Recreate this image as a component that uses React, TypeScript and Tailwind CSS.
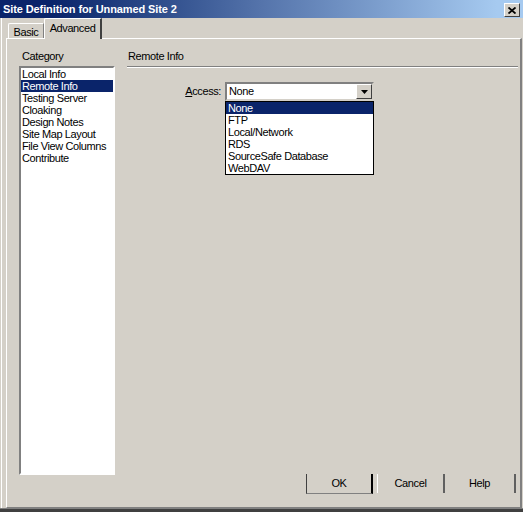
import { Fragment } from "react";

const CATEGORIES = [
  "Local Info",
  "Remote Info",
  "Testing Server",
  "Cloaking",
  "Design Notes",
  "Site Map Layout",
  "File View Columns",
  "Contribute",
];

const ACCESS_OPTIONS = ["None", "FTP", "Local/Network", "RDS", "SourceSafe Database", "WebDAV"];

function CloseButton() {
  return (
    <div className="w-[16px] h-[14px] mt-[3px] mr-[3px] bg-[#d4d0c8] border-t border-l border-white border-r border-b border-r-[#404040] border-b-[#404040] flex items-center justify-center">
      <svg width="8" height="7" viewBox="0 0 8 7">
        <path d="M0.5 0.5 L7.5 6.5 M7.5 0.5 L0.5 6.5" stroke="#000" strokeWidth="1.8" />
      </svg>
    </div>
  );
}

export default function App() {
  return (
    <div className="w-[523px] h-[512px] bg-[#d4d0c8] flex flex-col font-['Liberation_Sans',Arial,sans-serif] text-[11px] tracking-[-0.4px] text-black overflow-hidden">
      {/* title bar */}
      <div className="h-[18px] flex justify-between bg-linear-to-r from-[#0a246a] from-10% via-[#5574ab] via-50% to-[#a6caf0] to-95%">
        <span className="pl-[3px] pt-[2px] text-white font-bold text-[11px] leading-[14px] tracking-[-0.1px]">
          Site Definition for Unnamed Site 2
        </span>
        <CloseButton />
      </div>

      <div className="flex-1 flex flex-col border-l border-white ml-[1px] mr-[1px]">
        {/* tabs */}
        <div className="h-[20px] flex items-end pl-[6px]">
          <div className="h-[15px] w-[36px] border-l border-t border-white border-r border-r-[#808080] rounded-tl-[2px] flex justify-center pt-[2px] leading-[12px]">
            Basic
          </div>
          <div className="relative z-10 -mb-[1px] h-[21px] w-[58px] bg-[#d4d0c8] border-l border-t border-white border-r-2 border-r-[#404040] rounded-tl-[2px] flex justify-center pt-[3px] leading-[12px]">
            Advanced
          </div>
        </div>

        {/* tab panel */}
        <div className="h-[470px] ml-[4px] border-l border-t border-white border-r-2 border-r-[#808080] border-b border-b-[#808080] flex">
          <div className="ml-[12px] w-[96px] flex flex-col pt-[11px]">
            <div className="leading-[12px] pl-[3px]">Category</div>
            <div className="mt-[4px] h-[409px] bg-white border-2 border-t-[#808080] border-l-[#808080] border-r-white border-b-white">
              {CATEGORIES.map((c) => (
                <div
                  key={c}
                  className={`h-[12px] leading-[12px] pl-[1px] whitespace-nowrap ${
                    c === "Remote Info" ? "bg-[#0a246a] text-white" : ""
                  }`}
                >
                  {c}
                </div>
              ))}
            </div>
          </div>

          <div className="flex-1 ml-[12px] mr-[2px] flex flex-col pt-[11px] pb-[13px]">
            <div className="leading-[12px] pl-[1px]">Remote Info</div>
            <div className="mt-[4px] border-t border-[#808080] border-b border-b-white" />

            <div className="mt-[14px] flex items-center">
              <div className="w-[94px] text-right">
                <span className="underline">A</span>ccess:
              </div>
              <div className="relative ml-[4px] w-[149px] h-[19px] bg-white border-2 border-t-[#808080] border-l-[#808080] border-r-[#d4d0c8] border-b-[#d4d0c8] flex items-center">
                <span className="pl-[2px] flex-1">None</span>
                <div className="w-[16px] h-[15px] bg-[#d4d0c8] border border-t-white border-l-white border-r-[#404040] border-b-[#404040] flex items-center justify-center">
                  <svg width="7" height="4" viewBox="0 0 7 4">
                    <path d="M0 0 H7 L3.5 4 Z" fill="#000" />
                  </svg>
                </div>

                <div className="absolute left-[-2px] top-[17px] w-[149px] bg-white border border-black">
                  {ACCESS_OPTIONS.map((o) => (
                    <Fragment key={o}>
                      <div
                        className={`h-[12px] leading-[12px] pl-[2px] whitespace-nowrap ${
                          o === "None" ? "bg-[#0a246a] text-white" : ""
                        }`}
                      >
                        {o}
                      </div>
                    </Fragment>
                  ))}
                </div>
              </div>
            </div>

            <div className="mt-auto flex justify-end mr-[2px]">
              <div className="w-[67px] h-[20px] border-l border-l-[#404040] border-b border-b-[#808080] border-r-2 border-r-black flex items-center justify-center">
                OK
              </div>
              <div className="ml-[4px] w-[68px] h-[19px] border-l border-l-white border-r-2 border-r-[#606060] flex items-center justify-center">
                Cancel
              </div>
              <div className="w-[71px] h-[19px] border-r-2 border-r-[#606060] flex items-center justify-center">
                Help
              </div>
            </div>
          </div>
        </div>
      </div>

      <div className="h-[4px] bg-[#404040] border-t border-[#808080]" />
    </div>
  );
}
